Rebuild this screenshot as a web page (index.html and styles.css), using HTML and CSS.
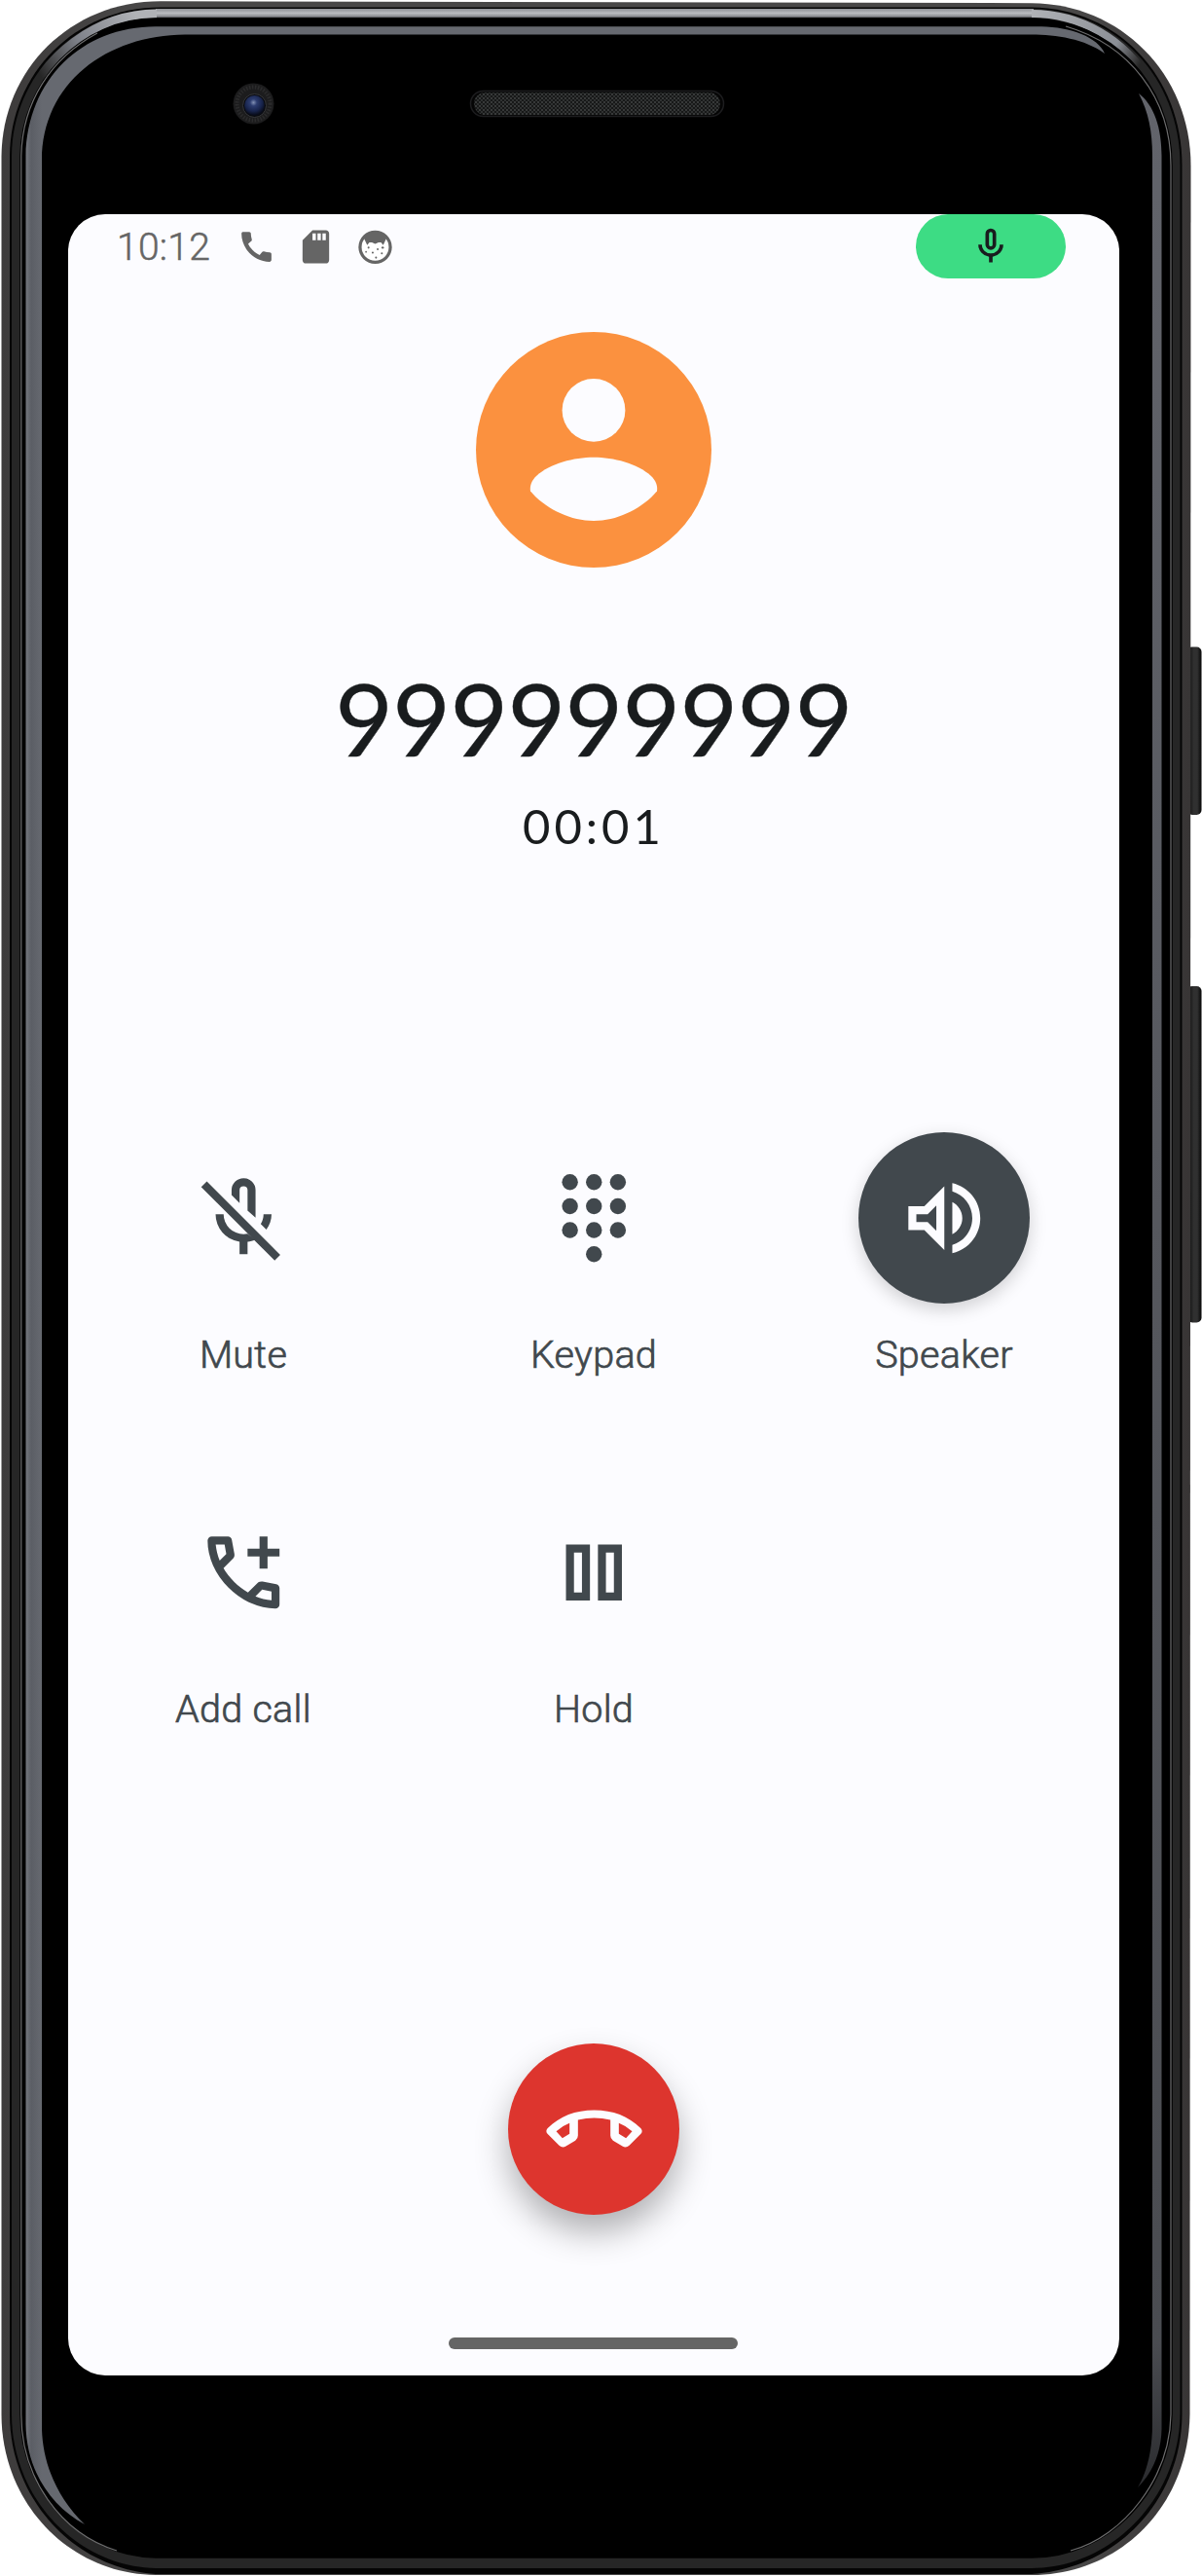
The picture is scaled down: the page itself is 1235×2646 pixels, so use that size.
FILE: index.html
```html
<!DOCTYPE html>
<html lang="en">
<head>
<meta charset="utf-8">
<title>Ongoing call</title>
<link rel="stylesheet" href="styles.css">
</head>
<body>
<div class="device">
  <svg class="frame" viewBox="0 0 1235 2646" width="1235" height="2646" aria-hidden="true">
    <defs>
      <linearGradient id="btn" x1="0" x2="1" y1="0" y2="0"><stop offset="0" stop-color="#0a0a0a"/><stop offset=".45" stop-color="#303030"/><stop offset=".7" stop-color="#303030"/><stop offset="1" stop-color="#050505"/></linearGradient>
      <linearGradient id="rim" gradientUnits="userSpaceOnUse" x1="0" x2="1235" y1="0" y2="0"><stop offset="0" stop-color="#3d3b3b"/><stop offset=".12" stop-color="#484747"/><stop offset=".9" stop-color="#484747"/><stop offset="1" stop-color="#363333"/></linearGradient>
      <linearGradient id="shine" x1="0" x2="0" y1="0" y2="1"><stop offset="0" stop-color="#8e9095"/><stop offset=".45" stop-color="#b9bbbf"/><stop offset=".75" stop-color="#909297"/><stop offset="1" stop-color="#26272a"/></linearGradient>
      <linearGradient id="cornerL" gradientUnits="userSpaceOnUse" x1="40" y1="75" x2="140" y2="15"><stop offset="0" stop-color="#8a8c92" stop-opacity="0"/><stop offset=".45" stop-color="#7f828a"/><stop offset="1" stop-color="#b0b2b6"/></linearGradient>
      <linearGradient id="cornerR" gradientUnits="userSpaceOnUse" x1="1060" y1="12" x2="1172" y2="65"><stop offset="0" stop-color="#b0b2b6"/><stop offset=".75" stop-color="#8b8f96"/><stop offset="1" stop-color="#8a8c92" stop-opacity="0"/></linearGradient>
      <linearGradient id="edge" gradientUnits="userSpaceOnUse" x1="26" x2="43" y1="0" y2="0"><stop offset="0" stop-color="#777a81"/><stop offset=".35" stop-color="#5b5e65"/><stop offset="1" stop-color="#666970"/></linearGradient>
      <linearGradient id="fadeDown" x1="0" x2="0" y1="0" y2="1"><stop offset="0" stop-color="#62646b"/><stop offset=".94" stop-color="#4a4c51"/><stop offset="1" stop-color="#2a2b2e"/></linearGradient>
      <radialGradient id="lens" cx=".45" cy=".35" r=".6"><stop offset="0" stop-color="#8290b4"/><stop offset=".28" stop-color="#2d3d70"/><stop offset=".7" stop-color="#18244c"/><stop offset="1" stop-color="#090d1c"/></radialGradient>
      <pattern id="mesh" width="4" height="4" patternUnits="userSpaceOnUse"><rect width="4" height="4" fill="#171818"/><circle cx="1" cy="1" r=".9" fill="#464949"/><circle cx="3" cy="3" r=".9" fill="#3a3d3d"/></pattern>
    </defs>
    <rect x="1220" y="664.500" width="14.500" height="172.500" rx="5" fill="url(#btn)"/>
    <rect x="1220" y="1013" width="14.500" height="345.500" rx="5" fill="url(#btn)"/>
    <path d="M165 1.300L1060 3.200C1150 3.500 1223.500 75 1223.500 170L1222.500 2480C1221 2575 1150 2645 1060 2645H160C70 2644 1.500 2570 1.500 2480V160C2.500 72 72 1.300 165 1.300Z" fill="url(#rim)"/>
    <path d="M165 7.500H1060C1148 8.500 1214.500 78 1214.500 170V2480C1214 2570 1145 2639 1060 2644H160C74 2638 10 2565 10 2480V160C10.500 76 77 7.500 165 7.500Z" fill="#050505"/>
    <path d="M165 9H1060C1146 10 1212.500 79 1212.500 170V2480C1211.500 2565 1143 2637.500 1060 2638H160C77 2636 12 2564 12 2480V160C12.500 78 79 9 165 9Z" fill="#262626"/>
    <rect x="160" y="9" width="902" height="10" fill="url(#shine)"/>
    <path d="M24 115C42 58 100 14 161 14" fill="none" stroke="url(#cornerL)" stroke-width="9"/>
    <path d="M1060 14C1110 14 1155 40 1182 84" fill="none" stroke="url(#cornerR)" stroke-width="8"/>
    <path d="M160 19H1060C1140 20 1204 84 1204 170V2480C1203 2560 1138 2627 1060 2627H160C84 2626 21 2560 21 2480V160C22 84 84 19 160 19Z" fill="#000" stroke="#000" stroke-width="1.500"/>
    <path d="M1095 27C1160 46 1203 100 1203 170V2480C1202 2545 1155 2605 1100 2620M120 2620C62 2602 21.800 2545 21.800 2480V160C23 105 52 60 100 34" fill="none" stroke="#6d6d6e" stroke-width="1.200"/>
    <path d="M26.500 160C28 82 84 27.300 160 27.300H1070C1100 28 1128 38 1135 55C1115 40 1085 35.500 1060 35.500H190C110 36 43 85 43 165V2495C44 2530 58 2565 87 2593C50 2573 27 2535 26.500 2490Z" fill="url(#edge)"/>
    <path d="M1170 96C1186 108 1193.500 132 1193.500 160V2495C1193 2520 1184 2540 1169 2555C1178 2540 1184 2518 1184 2490V160C1184 135 1180 115 1170 96Z" fill="url(#fadeDown)"/>
    <circle cx="260.500" cy="106.500" r="21" fill="#1c1c1d"/>
    <circle cx="260.500" cy="106.500" r="17" fill="none" stroke="#2b2b2c" stroke-width="4" stroke-dasharray="1.500 1.500"/>
    <circle cx="261.500" cy="108.500" r="12" fill="#090a0d" stroke="#36373b" stroke-width="1"/>
    <circle cx="261.500" cy="108.500" r="10.500" fill="url(#lens)"/>
    <rect x="483.500" y="93.500" width="260" height="26" rx="13" fill="#050505" stroke="#1d1d1f" stroke-width="1.500"/>
    <rect x="487" y="95" width="253" height="23" rx="11.500" fill="url(#mesh)"/>
  </svg>

  <main class="screen">
    <header class="status">
      <div class="status-left">
        <span class="clock">10:12</span>
        <svg class="status-icon" viewBox="0 0 24 24"><path d="M20.010 15.380c-1.230 0-2.420-.2-3.530-.56-.35-.12-.74-.03-1.010.24l-1.570 1.970c-2.830-1.350-5.480-3.900-6.890-6.830l1.950-1.660c.27-.28.35-.67.24-1.020-.37-1.110-.56-2.300-.56-3.530 0-.54-.45-.99-.99-.99H4.190C3.650 3 3 3.240 3 3.990 3 13.280 10.730 21 20.010 21c.71 0 .99-.63.99-1.180v-3.450c0-.54-.45-.99-.99-.99z"/></svg>
        <svg class="status-icon" viewBox="0 0 24 24"><path d="M18 2h-8L4.020 8 4 20c0 1.100.9 2 2 2h12c1.100 0 2-.9 2-2V4c0-1.100-.9-2-2-2zm-6 6h-2V4h2v4zm3 0h-2V4h2v4zm3 0h-2V4h2v4z"/></svg>
        <svg class="status-icon" viewBox="0 0 24 24"><circle cx="12" cy="12.200" r="9.100" fill="#fff" stroke="#656565" stroke-width="1.900"/><path d="M4 7.500C6.500 1.500 17.500 1.500 20 7.500L18.700 7 16.800 11 15.500 9.300H14L12 10.200 10 9.300H8.500L7.200 11 5.300 7Z"/><g><circle cx="8" cy="12.500" r=".6"/><circle cx="13.500" cy="13.500" r=".6"/><circle cx="16.500" cy="12.500" r=".7"/><circle cx="6.500" cy="15" r=".5"/><circle cx="10.500" cy="15.500" r=".6"/><circle cx="16" cy="16" r=".6"/><circle cx="12.500" cy="18.500" r=".6"/></g></svg>
      </div>
      <div class="mic-pill"><svg viewBox="0 0 24 24"><path fill-rule="evenodd" d="M12 14a3 3 0 0 0 3-3V5a3 3 0 0 0-6 0v6a3 3 0 0 0 3 3zM11 5a1 1 0 0 1 2 0v6a1 1 0 0 1-2 0zM17 11a5 5 0 0 1-10 0H5a7 7 0 0 0 6 6.920V21h2v-3.080A7 7 0 0 0 19 11z"/></svg></div>
    </header>

    <section class="caller">
      <svg class="avatar" viewBox="-121 -121 242 242"><circle r="121" fill="#fb913f"/><circle cy="-40.600" r="32.400" fill="#fcfcff"/><path fill="#fcfcff" d="M-65 42.600C-66 36-63 31-59 27C-45 14-20 7.800 0 7.800S45 14 59 27C63 31 66 36 65 42.600C50 60 25 73 0 73S-50 60-65 42.600Z"/></svg>
      <h1 class="number">999999999</h1>
      <p class="timer">00:01</p>
    </section>

    <section class="actions">
      <button class="action">
        <span class="disc"><svg viewBox="0 0 24 24"><path d="M2.810 2.810 1.390 4.220 19.780 22.610 21.190 21.190Z"/><path d="M9 6.200V5a3 3 0 0 1 6 0v6.900L13 10.100V5a1 1 0 0 0-2 0v3.200zM19 11h-2c0 .9-.25 1.700-.7 2.460l1.400 1.400C18.500 13.800 19 12.450 19 11zM5 11h2a5 5 0 0 0 5 5c.35 0 .7 0 1-.1l1.900 1.500c-.6.25-1.200.4-1.900.52V21h-2v-3.080A7 7 0 0 1 5 11z"/></svg></span>
        <span class="label">Mute</span>
      </button>
      <button class="action">
        <span class="disc"><svg viewBox="0 0 24 24"><circle cx="6" cy="3" r="2"/><circle cx="12" cy="3" r="2"/><circle cx="18" cy="3" r="2"/><circle cx="6" cy="9" r="2"/><circle cx="12" cy="9" r="2"/><circle cx="18" cy="9" r="2"/><circle cx="6" cy="15" r="2"/><circle cx="12" cy="15" r="2"/><circle cx="18" cy="15" r="2"/><circle cx="12" cy="21" r="2"/></svg></span>
        <span class="label">Keypad</span>
      </button>
      <button class="action">
        <span class="disc disc-on"><svg viewBox="0 0 24 24"><path d="M3 9v6h4l5 5V4L7 9H3zm7-.17v6.340L7.830 13H5v-2h2.830L10 8.830zM16.500 12c0-1.770-1.020-3.290-2.500-4.030v8.050c1.480-.73 2.500-2.250 2.500-4.020zM14 3.230v2.060c2.890.86 5 3.540 5 6.710s-2.110 5.850-5 6.710v2.060c4.010-.91 7-4.490 7-8.770 0-4.280-2.990-7.860-7-8.770z"/></svg></span>
        <span class="label">Speaker</span>
      </button>
      <button class="action">
        <span class="disc"><svg viewBox="0 0 24 24"><path d="M19.950 21q-3.125 0-6.175-1.363-3.050-1.362-5.550-3.862-2.500-2.500-3.862-5.550Q3 7.175 3 4.050q0-.45.3-.75t.75-.3H8.100q.35 0 .625.238.275.237.325.562l.65 3.500q.05.4-.025.675-.075.275-.275.475L6.975 10.900q.5.925 1.187 1.787.688.863 1.513 1.663.775.775 1.625 1.438.85.662 1.800 1.212l2.350-2.350q.225-.225.588-.338.362-.112.712-.062l3.450.7q.35.1.575.362.225.263.225.588v4.050q0 .45-.3.75t-.75.3zM6.025 9l1.650-1.650L7.250 5H5.025q.125 1.025.35 2.025.225 1 .65 1.975zm8.950 8.950q.975.425 1.988.675 1.012.25 2.037.325v-2.200l-2.350-.475zM16 3h2v3h3v2h-3v3h-2V8h-3V6h3z"/></svg></span>
        <span class="label">Add call</span>
      </button>
      <button class="action">
        <span class="disc"><svg viewBox="0 0 24 24"><path fill-rule="evenodd" d="M5 5h6v14H5zM7 7v10h2V7zM13 5h6v14h-6zM15 7v10h2V7z"/></svg></span>
        <span class="label">Hold</span>
      </button>
    </section>

    <footer class="bottom">
      <button class="hangup" aria-label="End call"><svg viewBox="-148.500 -148.500 297 297"><path fill-rule="evenodd" d="M-144-4C-105-42-58-60 0-60S105-42 144-4Q151 5 144 13L108 49Q98 58 87 51L58 34Q50 28 50 18V-30Q25-36 0-36T-50-30V18Q-50 28-58 34L-87 51Q-98 58-108 49L-144 13Q-151 5-144-4ZM-117 5-98 26-76 13V-20Q-99-11-117 5ZM117 5 98 26 76 13V-20Q99-11 117 5Z"/></svg></button>
      <div class="home-bar"></div>
    </footer>
  </main>
</div>
</body>
</html>
```
FILE: styles.css
```css
* { box-sizing: border-box; }
body { margin: 0; background: #fff; }
button { border: 0; padding: 0; background: none; font: inherit; color: inherit; }

.device {
  position: relative;
  width: 1235px;
  height: 2646px;
  padding: 220px 85px 206px 70px;
  overflow: hidden;
}
.frame { position: absolute; inset: 0; }

.screen {
  position: relative;
  display: flex;
  flex-direction: column;
  width: 1080px;
  height: 2220px;
  border-radius: 38px;
  background: #fcfcff;
  overflow: hidden;
  font-family: Roboto, "Liberation Sans", sans-serif;
}

.status {
  display: flex;
  justify-content: space-between;
  height: 66px;
  padding: 0 55px 0 50px;
}
.status-left { display: flex; align-items: center; gap: 20px; }
.clock {
  width: 103px;
  padding-top: 2px;
  font-size: 39px;
  font-weight: 300;
  line-height: 66px;
  letter-spacing: 0.300px;
  color: #656565;
  -webkit-text-stroke: 0.500px #656565;
  white-space: nowrap;
}
.status-icon { width: 41px; height: 41px; fill: #656565; }
.mic-pill {
  display: flex;
  align-items: center;
  justify-content: center;
  width: 154px;
  border-radius: 33px;
  background: #3ddc84;
}
.mic-pill svg { width: 44px; height: 44px; fill: #191c1e; }

.caller {
  display: flex;
  flex-direction: column;
  align-items: center;
  height: 647px;
  padding-top: 55px;
  font-family: Lato, sans-serif;
  color: #191c1e;
}
.avatar { width: 242px; height: 242px; }
.number {
  margin: 94px 0 0;
  font-size: 103px;
  line-height: 120px;
  font-weight: 400;
  letter-spacing: -0.700px;
  -webkit-text-stroke: 0.400px #191c1e;
}
.timer {
  margin: 21px 0 0;
  font-size: 49px;
  line-height: 60px;
  letter-spacing: 4px;
}

.actions {
  display: grid;
  grid-template-columns: repeat(3, 360px);
  grid-auto-rows: 364px;
  height: 1166px;
  padding-top: 10px;
}
.action { display: flex; flex-direction: column; align-items: center; }
.disc {
  display: flex;
  align-items: center;
  justify-content: center;
  flex: none;
  width: 176px;
  height: 176px;
  margin-top: 220px;
  border-radius: 50%;
}
.disc svg { width: 98.500px; height: 98.500px; fill: #41484d; overflow: visible; }
.disc-on { background: #41484d; box-shadow: 0 6px 18px rgba(0, 0, 0, 0.18); }
.disc-on svg { fill: #fcfcff; }
.label {
  margin-top: 29px;
  font-size: 39.500px;
  font-weight: 300;
  line-height: 48px;
  letter-spacing: 0.300px;
  color: #41484d;
  -webkit-text-stroke: 0.700px #41484d;
}

.bottom { display: flex; flex-direction: column; align-items: center; }
.hangup {
  display: flex;
  align-items: center;
  justify-content: center;
  width: 176px;
  height: 176px;
  border-radius: 50%;
  background: #dd352e;
  box-shadow: 0 18px 34px rgba(0, 0, 0, 0.3);
}
.hangup svg { width: 99px; height: 99px; fill: #fcfcff; }
.home-bar {
  width: 297px;
  height: 12px;
  border-radius: 6px;
  margin: 126px 1px 0 0;
  background: #656565;
}
```
